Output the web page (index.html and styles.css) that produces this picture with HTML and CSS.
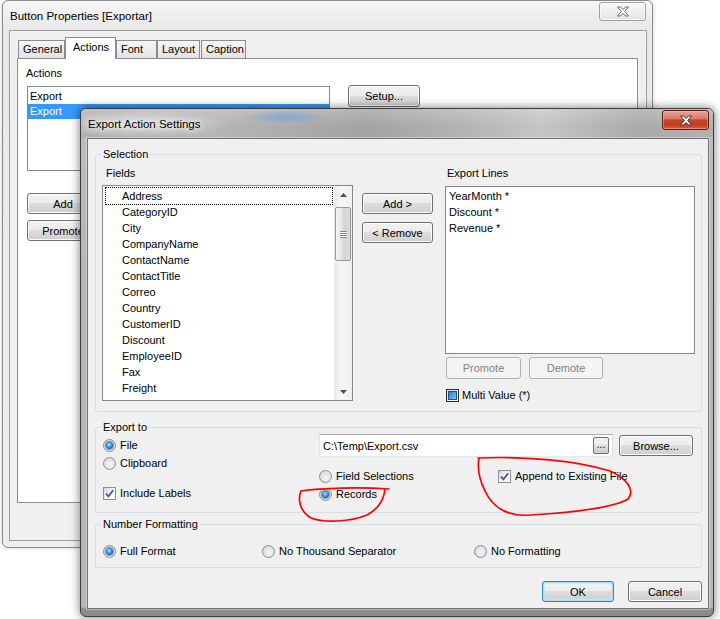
FILE: index.html
```html
<!DOCTYPE html>
<html>
<head>
<meta charset="utf-8">
<title>Export Action Settings</title>
<link rel="stylesheet" href="styles.css">
</head>
<body>
<div class="desktop">

  <div class="win win-back">
    <div class="titlebar back-title">
      <span class="title">Button Properties [Exportar]</span>
      <span class="close close-inactive">
        <svg width="14" height="11" viewBox="0 0 14 11"><polygon points="1.5,1 4.5,1 7,3.6 9.5,1 12.5,1 8.7,5.5 12.5,10 9.5,10 7,7.4 4.5,10 1.5,10 5.3,5.5" fill="#fff" stroke="#6a6a6a" stroke-width="1"/></svg>
      </span>
    </div>
    <div class="client back-client">
      <div class="tabs">
        <div class="tab tab-general">General</div>
        <div class="tab tab-active tab-actions">Actions</div>
        <div class="tab tab-font">Font</div>
        <div class="tab tab-layout">Layout</div>
        <div class="tab tab-caption">Caption</div>
      </div>
      <div class="tabpanel">
        <div class="lbl">Actions</div>
        <div class="actions-row">
          <div class="listbox actions-list">
            <div class="aitem">Export</div>
            <div class="aitem aitem-sel">Export</div>
          </div>
          <button class="btn btn-setup">Setup...</button>
        </div>
        <div class="action-btns">
          <button class="btn btn-back">Add</button>
          <button class="btn btn-back">Promote</button>
        </div>
      </div>
    </div>
  </div>

  <div class="win win-front">
    <div class="titlebar front-title">
      <span class="title title-glow">Export Action Settings</span>
      <span class="close close-red">
        <svg width="14" height="11" viewBox="0 0 14 11"><polygon points="1.5,1 4.5,1 7,3.6 9.5,1 12.5,1 8.7,5.5 12.5,10 9.5,10 7,7.4 4.5,10 1.5,10 5.3,5.5" fill="#fff" stroke="#3b3b3b" stroke-width="1"/></svg>
      </span>
    </div>
    <div class="client front-client">

      <fieldset class="group group-sel">
        <legend>Selection</legend>
        <div class="sel-body">
          <div class="col-fields">
            <div class="lbl lbl-fields">Fields</div>
            <div class="listbox fields-list">
              <div class="fields-items">
                <div class="fitem fitem-focus">Address</div>
                <div class="fitem">CategoryID</div>
                <div class="fitem">City</div>
                <div class="fitem">CompanyName</div>
                <div class="fitem">ContactName</div>
                <div class="fitem">ContactTitle</div>
                <div class="fitem">Correo</div>
                <div class="fitem">Country</div>
                <div class="fitem">CustomerID</div>
                <div class="fitem">Discount</div>
                <div class="fitem">EmployeeID</div>
                <div class="fitem">Fax</div>
                <div class="fitem">Freight</div>
              </div>
              <div class="vscroll">
                <div class="sb-arrow">
                  <svg width="7" height="4" viewBox="0 0 7 4"><path d="M0 4 L3.5 0 L7 4 Z" fill="#505050"/></svg>
                </div>
                <div class="sb-thumb">
                  <span class="grip"></span>
                </div>
                <div class="sb-space"></div>
                <div class="sb-arrow">
                  <svg width="7" height="4" viewBox="0 0 7 4"><path d="M0 0 L7 0 L3.5 4 Z" fill="#505050"/></svg>
                </div>
              </div>
            </div>
          </div>
          <div class="col-mid">
            <button class="btn btn-mid">Add &gt;</button>
            <button class="btn btn-mid">&lt; Remove</button>
          </div>
          <div class="col-lines">
            <div class="lbl lbl-lines">Export Lines</div>
            <div class="listbox lines-list">
              <div class="litem">YearMonth *</div>
              <div class="litem">Discount *</div>
              <div class="litem">Revenue *</div>
            </div>
            <div class="pd-row">
              <button class="btn btn-disabled btn-promote">Promote</button>
              <button class="btn btn-disabled btn-demote">Demote</button>
            </div>
            <div class="opt opt-mv"><span class="check check-indet"><span class="indet-fill"></span></span><span>Multi Value (*)</span></div>
          </div>
        </div>
      </fieldset>

      <fieldset class="group group-exp">
        <legend>Export to</legend>
        <div class="exp-body">
          <div class="exp-left">
            <div class="opt opt-file"><span class="radio radio-on"></span><span>File</span></div>
            <div class="opt opt-clip"><span class="radio"></span><span>Clipboard</span></div>
            <div class="opt opt-labels"><span class="check"><svg width="11" height="11" viewBox="0 0 11 11"><path d="M2 5.6 L4.4 8.3 L9.2 2.2" fill="none" stroke="#3e5aa0" stroke-width="1.8"/></svg></span><span>Include Labels</span></div>
          </div>
          <div class="exp-right">
            <div class="path-row">
              <div class="textbox">
                <span>C:\Temp\Export.csv</span>
                <span class="dots-btn">...</span>
              </div>
              <button class="btn btn-browse">Browse...</button>
            </div>
            <div class="mode-row">
              <div class="mode-col">
                <div class="opt"><span class="radio"></span><span>Field Selections</span></div>
                <div class="opt opt-records"><span class="radio radio-on"></span><span>Records</span></div>
              </div>
              <div class="opt"><span class="check"><svg width="11" height="11" viewBox="0 0 11 11"><path d="M2 5.6 L4.4 8.3 L9.2 2.2" fill="none" stroke="#3e5aa0" stroke-width="1.8"/></svg></span><span>Append to Existing File</span></div>
            </div>
          </div>
        </div>
      </fieldset>

      <fieldset class="group group-nf">
        <legend>Number Formatting</legend>
        <div class="nf-body">
          <div class="opt"><span class="radio radio-on"></span><span>Full Format</span></div>
          <div class="opt"><span class="radio"></span><span>No Thousand Separator</span></div>
          <div class="opt"><span class="radio"></span><span>No Formatting</span></div>
        </div>
      </fieldset>

      <div class="dlg-buttons">
        <button class="btn btn-ok">OK</button>
        <button class="btn btn-cancel">Cancel</button>
      </div>
    </div>
  </div>

  <svg class="annot" width="720" height="619" viewBox="0 0 720 619">
    <path d="M389 489 C360 487, 322 488, 301 491 C297 501, 301 512, 311 518 C324 523, 350 522, 367 515 C378 509, 384 500, 385 489" fill="none" stroke="#f00" stroke-width="1.7" stroke-linecap="round"/>
    <path d="M478 458 C520 456, 575 460, 610 471 C628 479, 635 491, 628 499 C615 507, 580 512, 531 515 C506 517, 492 506, 485 491 C480 481, 477 469, 479 458" fill="none" stroke="#f00" stroke-width="1.7" stroke-linecap="round"/>
  </svg>
</div>
</body>
</html>
```

FILE: styles.css
```css
* { box-sizing: border-box; }

html, body {
  margin: 0;
  padding: 0;
}

body {
  font-family: "Liberation Sans", Arial, sans-serif;
  font-size: 11px;
  color: #000;
  background: #fff;
}

.desktop {
  position: relative;
  width: 720px;
  height: 619px;
  overflow: hidden;
  background: #fff;
}

/* ---------- windows ---------- */
.win {
  position: absolute;
  display: flex;
  flex-direction: column;
  border-radius: 6px;
}

.win-back {
  left: 2px;
  top: 0;
  width: 651px;
  height: 548px;
  border: 1px solid #8a8a8a;
  background: linear-gradient(to bottom, #f6f6f6 0, #e8e8e8 29px, #eeeeee 100%);
  box-shadow: 0 0 5px rgba(0, 0, 0, 0.18);
}

.win-front {
  left: 80px;
  top: 108px;
  width: 634px;
  height: 509px;
  border: 1px solid #3c3c3c;
  background: linear-gradient(to bottom, #bdbdbd 0, #b5b5b5 40%, #b6b6b6 calc(100% - 9px), #8f8f8f calc(100% - 7px), #8a8a8a 100%);
  box-shadow: 0 0 8px 1px rgba(0, 0, 0, 0.45);
}

.titlebar {
  display: flex;
  justify-content: space-between;
  align-items: flex-start;
  height: 29px;
  flex: none;
  padding-left: 7px;
  border-radius: 5px 5px 0 0;
}

.back-title { padding-right: 6px; }

.front-title {
  padding-right: 4px;
  background:
    radial-gradient(ellipse 45px 7px at 205px 8px, rgba(70, 150, 235, 0.45), rgba(70, 150, 235, 0)),
    radial-gradient(ellipse 90px 14px at 60px 15px, rgba(255, 255, 255, 0.55), rgba(255, 255, 255, 0)),
    linear-gradient(to bottom, rgba(255, 255, 255, 0.2), rgba(255, 255, 255, 0) 60%),
    linear-gradient(to right, #b0b0b0 0%, #b6b6b6 20%, #a3a3a3 45%, #b3b3b3 60%, #c5c5c5 73%, #aaaaaa 88%, #b2b2b2 100%);
}

.title {
  font-size: 11.5px;
  line-height: 15px;
  margin-top: 8px;
  white-space: nowrap;
}

.title-glow {
  text-shadow: 0 0 5px #fff, 0 0 9px rgba(255, 255, 255, 0.9);
}

.close {
  width: 47px;
  display: flex;
  align-items: center;
  justify-content: center;
  border-radius: 3px;
  margin-top: 1px;
}

.close-inactive {
  height: 19px;
  border: 1px solid #a2a2a2;
  background: linear-gradient(to bottom, #f8f8f8, #e4e4e4);
  box-shadow: inset 0 0 0 1px rgba(255, 255, 255, 0.7);
}

.close-red {
  height: 20px;
  border: 1px solid #5e1b10;
  background: linear-gradient(to bottom, #e9a797 0%, #d7796a 42%, #c6452c 50%, #c33a20 78%, #d7684b 100%);
  box-shadow: inset 0 0 0 1px rgba(255, 190, 170, 0.45);
}

.client {
  flex: 1;
  display: flex;
  flex-direction: column;
  background: #f0f0f0;
}

/* ---------- back window ---------- */
.back-client {
  margin: 0 5px 6px 6px;
  border: 1px solid #9c9c9c;
  padding: 6px 8px 37px 7px;
}

.tabs {
  display: flex;
  align-items: flex-end;
  padding-left: 1px;
  height: 21px;
  position: relative;
  z-index: 1;
}

.tab {
  height: 18px;
  border: 1px solid #898c95;
  border-bottom: none;
  line-height: 17px;
  padding-left: 4px;
  background: linear-gradient(to bottom, #f6f6f6, #e3e3e3);
  white-space: nowrap;
}

.tab-general { width: 47px; }
.tab-font { width: 41px; }
.tab-layout { width: 43px; }
.tab-caption { width: 45px; margin-left: 1px; }

.tab-active {
  width: 51px;
  height: 22px;
  margin-bottom: -1px;
  padding-left: 7px;
  line-height: 19px;
  background: #fff;
}

.tabpanel {
  flex: 1;
  border: 1px solid #898c95;
  background: #fff;
  padding: 7px 8px 0 8px;
}

.lbl {
  line-height: 14px;
  white-space: nowrap;
}

.actions-row {
  display: flex;
  align-items: flex-start;
  margin-top: 6px;
}

.listbox {
  border: 1px solid #828790;
  background: #fff;
}

.actions-list {
  width: 303px;
  height: 85px;
  margin-left: 1px;
  padding-top: 2px;
}

.aitem {
  height: 15px;
  line-height: 15px;
  padding-left: 2px;
}

.aitem-sel {
  background: #3399ff;
  color: #fff;
}

.action-btns {
  display: flex;
  flex-direction: column;
  gap: 6px;
  margin-top: 22px;
  margin-left: 1px;
}

/* ---------- buttons ---------- */
.btn {
  font-family: "Liberation Sans", Arial, sans-serif;
  font-size: 11px;
  color: #000;
  margin: 0;
  padding: 0;
  height: 21px;
  border: 1px solid #707070;
  border-radius: 3px;
  background: linear-gradient(to bottom, #f2f2f2 0%, #ebebeb 49%, #dddddd 50%, #cfcfcf 100%);
  box-shadow: inset 0 0 0 1px #fbfbfb;
  display: flex;
  align-items: center;
  justify-content: center;
  white-space: nowrap;
}

.btn-setup {
  width: 72px;
  height: 22px;
  margin-left: 18px;
  margin-top: -1px;
}

.btn-back { width: 72px; }

.btn-mid { width: 71px; }

.btn-disabled {
  height: 22px;
  border-color: #adb2b5;
  background: #f4f4f4;
  box-shadow: none;
  color: #838383;
}

.btn-promote { width: 75px; margin-left: 1px; }
.btn-demote { width: 74px; }

.btn-browse {
  width: 74px;
  margin-left: 6px;
  margin-top: 1px;
}

.btn-ok {
  width: 72px;
  border-color: #3c7fb1;
  box-shadow: inset 0 0 0 1px #a9e2fb, inset 0 0 0 2px rgba(190, 235, 255, 0.6);
}

.btn-cancel { width: 74px; }

/* ---------- front window ---------- */
.front-client {
  margin: 0 4px 7px 6px;
  border: 1px solid #707070;
  padding: 8px 6px 6px 7px;
  box-shadow: 0 0 0 1px rgba(255, 255, 255, 0.35);
}

.group {
  margin: 0;
  min-width: 0;
  border: 1px solid #d5dfe5;
  border-radius: 3px;
  padding: 0 6px 9px 7px;
}

.group legend {
  padding: 0 2px;
  margin-left: -2px;
  line-height: 14px;
  font-size: 11px;
}

.group-exp {
  margin-top: 8px;
  padding-bottom: 11px;
}

.group-nf {
  margin-top: 4px;
}

.sel-body {
  display: flex;
  align-items: flex-start;
  margin-top: 5px;
  margin-left: -1px;
}

.col-fields { width: 251px; flex: none; }

.lbl-fields { padding-left: 4px; }

.fields-list {
  margin-top: 5px;
  height: 216px;
  display: flex;
}

.fields-items {
  flex: 1;
  overflow: hidden;
  padding-top: 2px;
}

.fitem {
  height: 16px;
  line-height: 16px;
  margin: 0 2px 0 3px;
  padding-left: 16px;
  white-space: nowrap;
}

.fitem-focus {
  outline: 1px dotted #000;
}

.vscroll {
  width: 18px;
  flex: none;
  display: flex;
  flex-direction: column;
  background: linear-gradient(to right, #e9e9e9, #f6f6f6 40%, #f0f0f0);
}

.sb-arrow {
  height: 17px;
  flex: none;
  display: flex;
  align-items: center;
  justify-content: center;
}

.sb-thumb {
  height: 54px;
  margin: 4px 1px 0 1px;
  border: 1px solid #979797;
  border-radius: 2px;
  background: linear-gradient(to right, #f5f5f5, #e4e4e4 45%, #d5d5d5 55%, #dcdcdc);
  display: flex;
  align-items: center;
  justify-content: center;
}

.grip {
  width: 7px;
  height: 7px;
  background: repeating-linear-gradient(to bottom, #8a8a8a 0, #8a8a8a 1px, #fafafa 1px, #fafafa 2px);
}

.sb-space { flex: 1; }

.col-mid {
  width: 71px;
  flex: none;
  margin: 27px 12px 0 9px;
  display: flex;
  flex-direction: column;
  gap: 8px;
}

.col-lines { width: 250px; flex: none; }

.lbl-lines { padding-left: 2px; }

.lines-list {
  margin-top: 6px;
  height: 168px;
  padding-top: 1px;
}

.litem {
  height: 16px;
  line-height: 16px;
  padding-left: 3px;
}

.pd-row {
  display: flex;
  gap: 8px;
  margin-top: 3px;
}

.opt {
  display: flex;
  align-items: center;
  gap: 4px;
  height: 14px;
  white-space: nowrap;
}

.opt-mv {
  margin-top: 9px;
  margin-left: 1px;
  gap: 3px;
}

.radio {
  width: 13px;
  height: 13px;
  flex: none;
  border: 1px solid #8c8e8f;
  border-radius: 50%;
  background: radial-gradient(circle at 55% 60%, #f6f6f6 0, #e2e2e2 55%, #c9c9c9 100%);
  display: flex;
  align-items: center;
  justify-content: center;
}

.radio-on::after {
  content: "";
  width: 7px;
  height: 7px;
  border-radius: 50%;
  background: radial-gradient(circle at 45% 40%, #c6eeff 0, #3a97e6 40%, #0f4f9e 85%, #0b3d7a 100%);
  box-shadow: 0 0 0 1px rgba(30, 70, 120, 0.55);
}

.check {
  width: 13px;
  height: 13px;
  flex: none;
  border: 1px solid #8e8f8f;
  background: linear-gradient(135deg, #d6d6d6, #f6f6f6 60%, #ffffff);
  display: flex;
  align-items: center;
  justify-content: center;
}

.check-indet {
  border-color: #2c2c2c;
}

.indet-fill {
  width: 9px;
  height: 9px;
  border: 1px solid #1d4f88;
  background: linear-gradient(135deg, #2a7bd2, #5cb2ec 70%, #86cdf4);
}

.exp-body {
  display: flex;
  align-items: flex-start;
}

.exp-left {
  width: 216px;
  flex: none;
}

.opt-file { margin-top: 4px; }
.opt-clip { margin-top: 4px; }
.opt-labels { margin-top: 16px; }

.exp-right {
  flex: 1;
  min-width: 0;
}

.path-row {
  display: flex;
  align-items: flex-start;
}

.textbox {
  width: 294px;
  height: 23px;
  border: 1px solid;
  border-color: #abadb3 #dbdfe6 #e3e9ef #e2e3ea;
  background: #fff;
  display: flex;
  align-items: center;
  justify-content: space-between;
  padding: 0 3px 0 3px;
  white-space: nowrap;
}

.dots-btn {
  width: 16px;
  height: 17px;
  border: 1px solid #707070;
  border-radius: 2px;
  background: linear-gradient(to bottom, #f2f2f2 0%, #ebebeb 49%, #dddddd 50%, #cfcfcf 100%);
  display: flex;
  align-items: center;
  justify-content: center;
  line-height: 12px;
  padding-bottom: 2px;
  font-size: 10px;
}

.mode-row {
  display: flex;
  align-items: flex-start;
  margin-top: 12px;
}

.mode-col {
  width: 179px;
  flex: none;
}

.opt-records { margin-top: 4px; }

.nf-body {
  display: grid;
  grid-template-columns: 159px 212px auto;
  margin-top: 13px;
}

.dlg-buttons {
  display: flex;
  justify-content: flex-end;
  gap: 14px;
  margin-top: 13px;
}

.annot {
  position: absolute;
  left: 0;
  top: 0;
  pointer-events: none;
}
```
